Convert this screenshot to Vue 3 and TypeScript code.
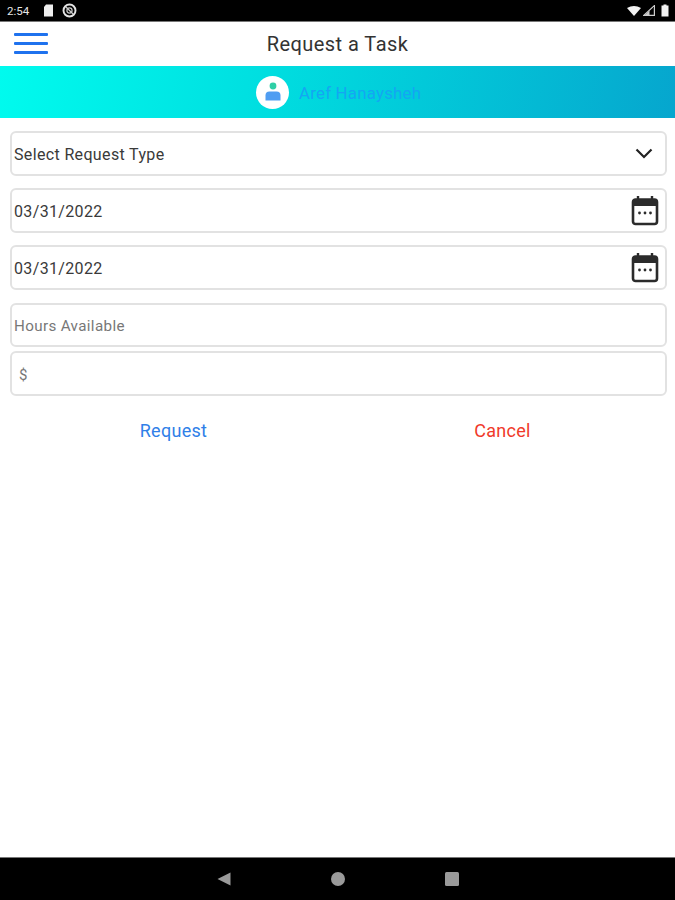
<script setup lang="ts">
const dates: string[] = ['03/31/2022', '03/31/2022']
</script>

<template>
  <div class="screen">
    <div class="status">
      <div class="status-left">
        <span class="time">2:54</span>
        <svg class="sd" width="11" height="13" viewBox="0 0 11 13"><path d="M3 0.5H10V12.5H1V3Z" fill="#eee" /></svg>
        <svg class="block" width="15" height="15" viewBox="0 0 14 14">
          <circle cx="7" cy="7" r="5.6" fill="none" stroke="#e4e4e4" stroke-width="1.8" />
          <circle cx="7" cy="7" r="2.4" fill="none" stroke="#ccc" stroke-width="1.1" />
          <path d="M3.5 3.5L10.5 10.5" stroke="#ccc" stroke-width="1.1" />
        </svg>
      </div>
      <div class="status-right">
        <svg width="14" height="10" viewBox="0 0 14 10"><path d="M0 2Q7 -2 14 2L7 10Z" fill="#f2f2f2" /></svg>
        <svg class="signal" width="12" height="11" viewBox="0 0 12 11"><path d="M11.4 0.6V10.4H0.8Z" fill="none" stroke="#ccc" stroke-width="1.2" /><path d="M6.5 5.5V10.5H1.5Z" fill="#ccc" /></svg>
        <svg class="battery" width="8" height="13" viewBox="0 0 8 13"><path d="M2.5 0.5H5.5V1.5H7.5V12.5H0.5V1.5H2.5Z" fill="#f2f2f2" /></svg>
      </div>
    </div>

    <header class="topbar">
      <div class="menu"><i></i><i></i><i></i></div>
      <h1>Request a Task</h1>
    </header>

    <div class="banner">
      <span class="avatar">
        <svg width="18" height="20" viewBox="0 0 18 20">
          <circle cx="9" cy="4" r="3.4" fill="#2fcfa6" />
          <path d="M1.5 18.5V13.5Q1.5 9.5 5.5 9.5H12.5Q16.5 9.5 16.5 13.5V18.5Z" fill="#4f9df2" />
        </svg>
      </span>
      <span class="name">Aref Hanaysheh</span>
    </div>

    <main class="form">
      <div class="field select">
        <span>Select Request Type</span>
        <svg class="chev" width="18" height="11" viewBox="0 0 18 11"><path d="M1.5 1.5L9 9L16.5 1.5" fill="none" stroke="#222" stroke-width="2.2" /></svg>
      </div>
      <div v-for="(d, i) in dates" :key="i" class="field date">
        <span>{{ d }}</span>
        <svg class="cal" width="28" height="31" viewBox="0 0 28 31">
          <path d="M7 1V6M21 1V6" stroke="#2b2b2b" stroke-width="2.4" />
          <rect x="2" y="4.5" width="24" height="24.5" rx="2.5" fill="#fff" stroke="#2b2b2b" stroke-width="2.6" />
          <rect x="2" y="4.5" width="24" height="6.5" fill="#2b2b2b" />
          <circle cx="8.5" cy="18" r="1.4" fill="#2b2b2b" />
          <circle cx="14" cy="18" r="1.4" fill="#2b2b2b" />
          <circle cx="19.5" cy="18" r="1.4" fill="#2b2b2b" />
        </svg>
      </div>
      <div class="stack">
        <div class="field hours"><span>Hours Available</span></div>
        <div class="field money"><span>$</span></div>
      </div>
      <div class="actions">
        <span class="request">Request</span>
        <span class="cancel">Cancel</span>
      </div>
    </main>

    <footer class="nav">
      <svg width="16" height="16" viewBox="0 0 16 16"><path d="M14.5 1.5V14.5L1.5 8Z" fill="#9a9a9a" /></svg>
      <svg width="16" height="16" viewBox="0 0 16 16"><circle cx="8" cy="8" r="7" fill="#9a9a9a" /></svg>
      <svg width="16" height="16" viewBox="0 0 16 16"><rect x="1" y="1" width="14" height="14" rx="1.5" fill="#9a9a9a" /></svg>
    </footer>
  </div>
</template>

<style>
html, body { margin: 0; background: #fff; }
</style>

<style scoped>
.screen {
  width: 675px;
  height: 900px;
  display: flex;
  flex-direction: column;
  font-family: Roboto, "Liberation Sans", sans-serif;
  background: #fff;
  overflow: hidden;
}
.status {
  height: 21px;
  background: #000;
  display: flex;
  align-items: center;
  justify-content: space-between;
  padding: 0 6px 0 7px;
  box-shadow: 0 1px 0 #777;
  position: relative;
}
.status-left, .status-right { display: flex; align-items: center; }
.time { color: #e6e6e6; font-size: 11.5px; width: 36px; }
.sd { margin-right: 8px; }
.status-right { gap: 2px; }
.battery { margin-left: 4px; }
.topbar {
  height: 45px;
  display: flex;
  align-items: center;
  justify-content: center;
  position: relative;
}
.topbar h1 {
  margin: 0;
  font-size: 20px;
  font-weight: 400;
  color: #333;
  letter-spacing: 0.45px;
}
.menu {
  position: absolute;
  left: 14px;
  top: 12px;
  width: 34px;
  display: flex;
  flex-direction: column;
  gap: 6px;
}
.menu i { display: block; height: 3px; background: #1f72ee; border-radius: 1px; }
.banner {
  height: 52px;
  background: linear-gradient(100deg, #00fbee 0%, #00dcdf 42%, #06a6ce 100%);
  display: flex;
  align-items: center;
  padding-left: 256px;
  box-sizing: border-box;
}
.avatar {
  width: 33px;
  height: 33px;
  border-radius: 50%;
  background: #fff;
  display: flex;
  align-items: center;
  justify-content: center;
  margin-right: 10px;
}
.name { color: #14a6f2; font-size: 16.8px; letter-spacing: 0.25px; padding-top: 2px; }
.form {
  flex: 1;
  padding: 13px 8px 0 10px;
  display: flex;
  flex-direction: column;
  gap: 12px;
}
.field {
  border: 2px solid #e2e2e2;
  border-radius: 6px;
  box-sizing: border-box;
  display: flex;
  align-items: center;
  justify-content: space-between;
  padding: 2px 0 0 2px;
  font-size: 16px;
  color: #3a3a3a;
  letter-spacing: 0.35px;
  background: #fff;
}
.select { height: 45px; padding-right: 12px; }
.date { height: 45px; padding-right: 6px; }
.date .cal { margin-top: -2px; }
.select .chev { margin-top: -3px; }
.stack { display: flex; flex-direction: column; gap: 4px; margin-top: 1px; }
.hours { height: 44px; font-size: 15.2px; color: #777; }
.money { height: 45px; font-size: 15px; color: #777; padding-left: 7px; }
.actions {
  display: flex;
  margin-top: 12px;
  font-size: 18px;
  letter-spacing: 0.3px;
}
.actions span { flex: 1; text-align: center; }
.request { color: #2f7fe8; margin-left: -1px; }
.cancel { color: #f03a2a; }
.nav {
  height: 42px;
  background: #000;
  box-shadow: 0 -1px 0 #777;
  display: flex;
  align-items: center;
  justify-content: center;
  gap: 98px;
  position: relative;
}
</style>
